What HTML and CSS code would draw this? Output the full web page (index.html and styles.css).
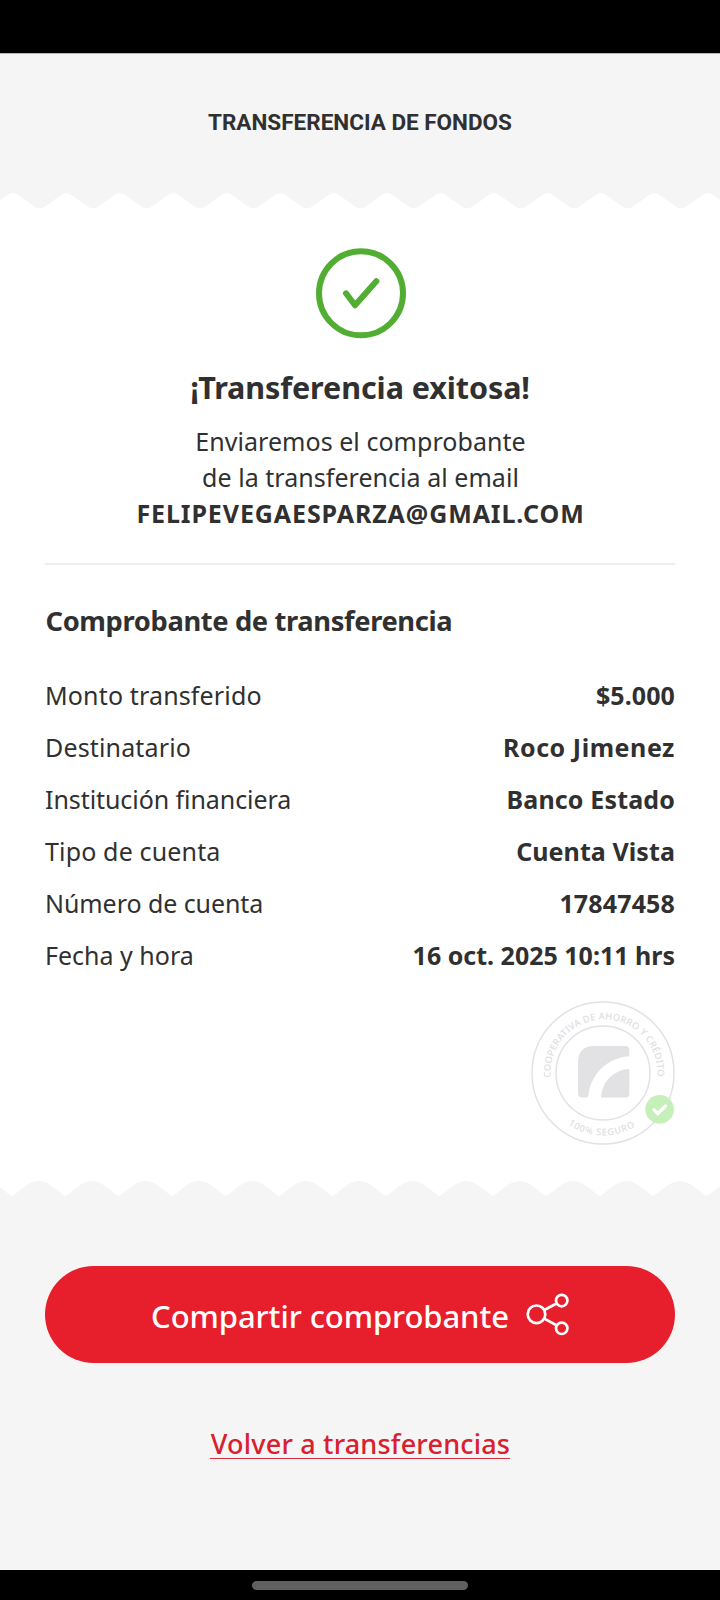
FILE: index.html
```html
<!DOCTYPE html>
<html lang="es">
<head>
<meta charset="utf-8">
<title>Transferencia de fondos</title>
<link rel="stylesheet" href="styles.css">
</head>
<body>
<div class="screen">
  <div class="status-bar"></div>
  <header class="header"><h1 class="header-title">TRANSFERENCIA DE FONDOS</h1></header>

  <svg class="edge" width="720" height="18" viewBox="0 0 720 18" aria-hidden="true">
    <defs>
      <pattern id="teeth" x="13" width="53.45" height="18" patternUnits="userSpaceOnUse">
        <path d="M0 0H53.45V1.2Q51 .9 49 2.6L32 14.6Q26.7 18.6 21.4 14.6L4.4 2.6Q2.4 .9 0 1.2Z" fill="#f5f5f5"/>
      </pattern>
      <pattern id="scallops" x="11.8" width="53.45" height="18" patternUnits="userSpaceOnUse">
        <path d="M0 18V16C10 10 16 1 26.7 1S43.400 10 53.450 16V18Z" fill="#f5f5f5"/>
      </pattern>
    </defs>
    <rect width="720" height="18" fill="url(#teeth)"/>
  </svg>

  <main class="ticket">
    <section class="summary">
      <svg class="success" width="92" height="92" viewBox="0 0 92 92" fill="none" stroke="#52ae32" stroke-width="6" stroke-linecap="round" stroke-linejoin="round" aria-hidden="true">
        <circle cx="46" cy="46.300" r="42"/>
        <path d="M31 46.300L40 58.300L61.300 34.300"/>
      </svg>
      <h2 class="title">¡Transferencia exitosa!</h2>
      <p class="message">Enviaremos el comprobante<br>de la transferencia al email<br><b class="email">FELIPEVEGAESPARZA@GMAIL.COM</b></p>
    </section>

    <section class="details">
      <h3 class="details-title">Comprobante de transferencia</h3>
      <dl class="rows">
        <div class="row"><dt class="wide">Monto transferido</dt><dd>$5.000</dd></div>
        <div class="row"><dt class="wide">Destinatario</dt><dd class="wider">Roco Jimenez</dd></div>
        <div class="row"><dt class="tight">Institución financiera</dt><dd class="wide">Banco Estado</dd></div>
        <div class="row"><dt class="wide">Tipo de cuenta</dt><dd>Cuenta Vista</dd></div>
        <div class="row"><dt class="tight">Número de cuenta</dt><dd class="wide">17847458</dd></div>
        <div class="row"><dt>Fecha y hora</dt><dd class="plain">16 oct. 2025 10:11 hrs</dd></div>
      </dl>
      <svg class="seal" width="146" height="146" viewBox="-73 -73 146 146" role="img" aria-label="Sello de seguridad">
        <defs>
          <path id="arc-top" d="M-52.300 4.500A53.500 53.500 0 1 1 54.200 5.600"/>
          <path id="arc-bottom" d="M-35 51.500A62 62 0 0 0 34 52.500"/>
        </defs>
        <g fill="none" stroke="#e2e2e4" stroke-width="1.500">
          <circle r="71"/>
          <circle r="47"/>
        </g>
        <g class="seal-text">
          <text textLength="176"><textPath href="#arc-top" textLength="176">COOPERATIVA DE AHORRO Y CRÉDITO</textPath></text>
          <text textLength="71"><textPath href="#arc-bottom" textLength="71">100% SEGURO</textPath></text>
        </g>
        <path d="M-8.500-27H22.500Q26.300-27 26.300-23V-16.700C3-15-12 2-14.500 22Q-15 24.600-18 24.600H-20.500Q-25 24.600-25 20.500V-10.500Q-25-27-8.500-27ZM26.300-4V21Q26.300 24.600 22.500 24.600H-2C-1 8 11-3 26.300-4Z" fill="#e2e2e4"/>
        <circle cx="56.600" cy="36.400" r="14.300" fill="#c5f0ba"/>
        <path d="M51 36.800L54.700 40.600L62.500 33" fill="none" stroke="#fff" stroke-width="3.300" stroke-linecap="round"/>
      </svg>
    </section>
  </main>

  <svg class="edge" width="720" height="18" viewBox="0 0 720 18" aria-hidden="true">
    <rect width="720" height="18" fill="url(#scallops)"/>
  </svg>

  <footer class="actions">
    <button class="share" type="button">
      <span class="share-label">Compartir comprobante</span>
      <svg width="44" height="44" viewBox="0 0 44 44" fill="none" stroke="#fff" stroke-width="2.700" aria-hidden="true">
        <circle cx="11.500" cy="21.300" r="8.800"/>
        <circle cx="36.700" cy="7.600" r="5.700"/>
        <circle cx="36.700" cy="35.300" r="5.700"/>
        <path d="M19.300 17L31.500 10.500M19.300 25.600L31.500 32.300"/>
      </svg>
    </button>
    <a class="back" href="#">Volver a transferencias</a>
  </footer>
  <div class="nav-bar"><span class="nav-handle"></span></div>
</div>
</body>
</html>
```
FILE: styles.css
```css
* { box-sizing: border-box; margin: 0; padding: 0; }

body {
  background: #fff;
  color: #303030;
  font-family: "Noto Sans", "Open Sans", sans-serif;
  font-size: 25px;
}

.screen {
  display: flex;
  flex-direction: column;
  width: 720px;
  height: 1600px;
  overflow: hidden;
}

.status-bar {
  flex: none;
  height: 54px;
  background: #000;
  border-bottom: 1px solid #b4b4b4;
}

.header {
  flex: none;
  height: 138px;
  padding-top: 46px;
  background: #f5f5f5;
  text-align: center;
}

.header-title {
  font: 700 22.5px/44px Roboto, sans-serif;
}

.edge { display: block; flex: none; }

.ticket {
  flex: none;
  height: 970px;
  padding: 0 45px;
}

.summary {
  height: 355px;
  padding-top: 37px;
  border-bottom: 2px solid #eee;
  text-align: center;
}

.success { display: block; margin: 0 auto; position: relative; left: 1px; }

.title {
  margin-top: 28px;
  font-size: 30.5px;
  line-height: 40px;
  letter-spacing: -0.08px;
}

.message {
  margin-top: 16px;
  padding-left: 1px;
  line-height: 36px;
  letter-spacing: 0.04px;
}

.email { letter-spacing: 0.9px; }

.details {
  display: flex;
  flex-direction: column;
  padding-top: 36px;
}

.details-title {
  padding-left: 0.5px;
  font-size: 27.3px;
  line-height: 40px;
  letter-spacing: -0.36px;
}

.rows { margin-top: 28px; }

.row {
  display: flex;
  justify-content: space-between;
  line-height: 52px;
}

.row dd { font-weight: 700; letter-spacing: 0.08px; }
.row .wide { letter-spacing: 0.15px; }
.row .wider { letter-spacing: 0.55px; }
.row .tight { letter-spacing: -0.07px; }
.row .plain { letter-spacing: 0; }

.seal {
  align-self: flex-end;
  margin: 19px -1px 0 0;
}

.seal-text {
  fill: #dededf;
  font-size: 9.3px;
  font-weight: 500;
}

.actions {
  display: flex;
  flex: 1;
  flex-direction: column;
  align-items: center;
  padding-top: 68px;
  background: #f5f5f5;
}

.share {
  display: flex;
  align-items: center;
  justify-content: center;
  gap: 16px;
  width: 630px;
  height: 97px;
  border: 0;
  border-radius: 49px;
  background: #e71e2b;
  color: #fff;
  font: 500 31px/40px "Noto Sans", "Open Sans", sans-serif;
  letter-spacing: -0.09px;
}

.share-label { padding-top: 2px; }

.back {
  height: 35px;
  margin-top: 61px;
  padding-left: 1px;
  border-bottom: 1px solid #d9303b;
  color: #d9202e;
  font-size: 27px;
  font-weight: 500;
  line-height: 40px;
  letter-spacing: 0.2px;
  text-decoration: none;
}

.nav-bar {
  display: flex;
  flex: none;
  justify-content: center;
  height: 30px;
  padding-top: 11px;
  background: #000;
}

.nav-handle {
  width: 216px;
  height: 9px;
  border-radius: 5px;
  background: #606060;
}
```
